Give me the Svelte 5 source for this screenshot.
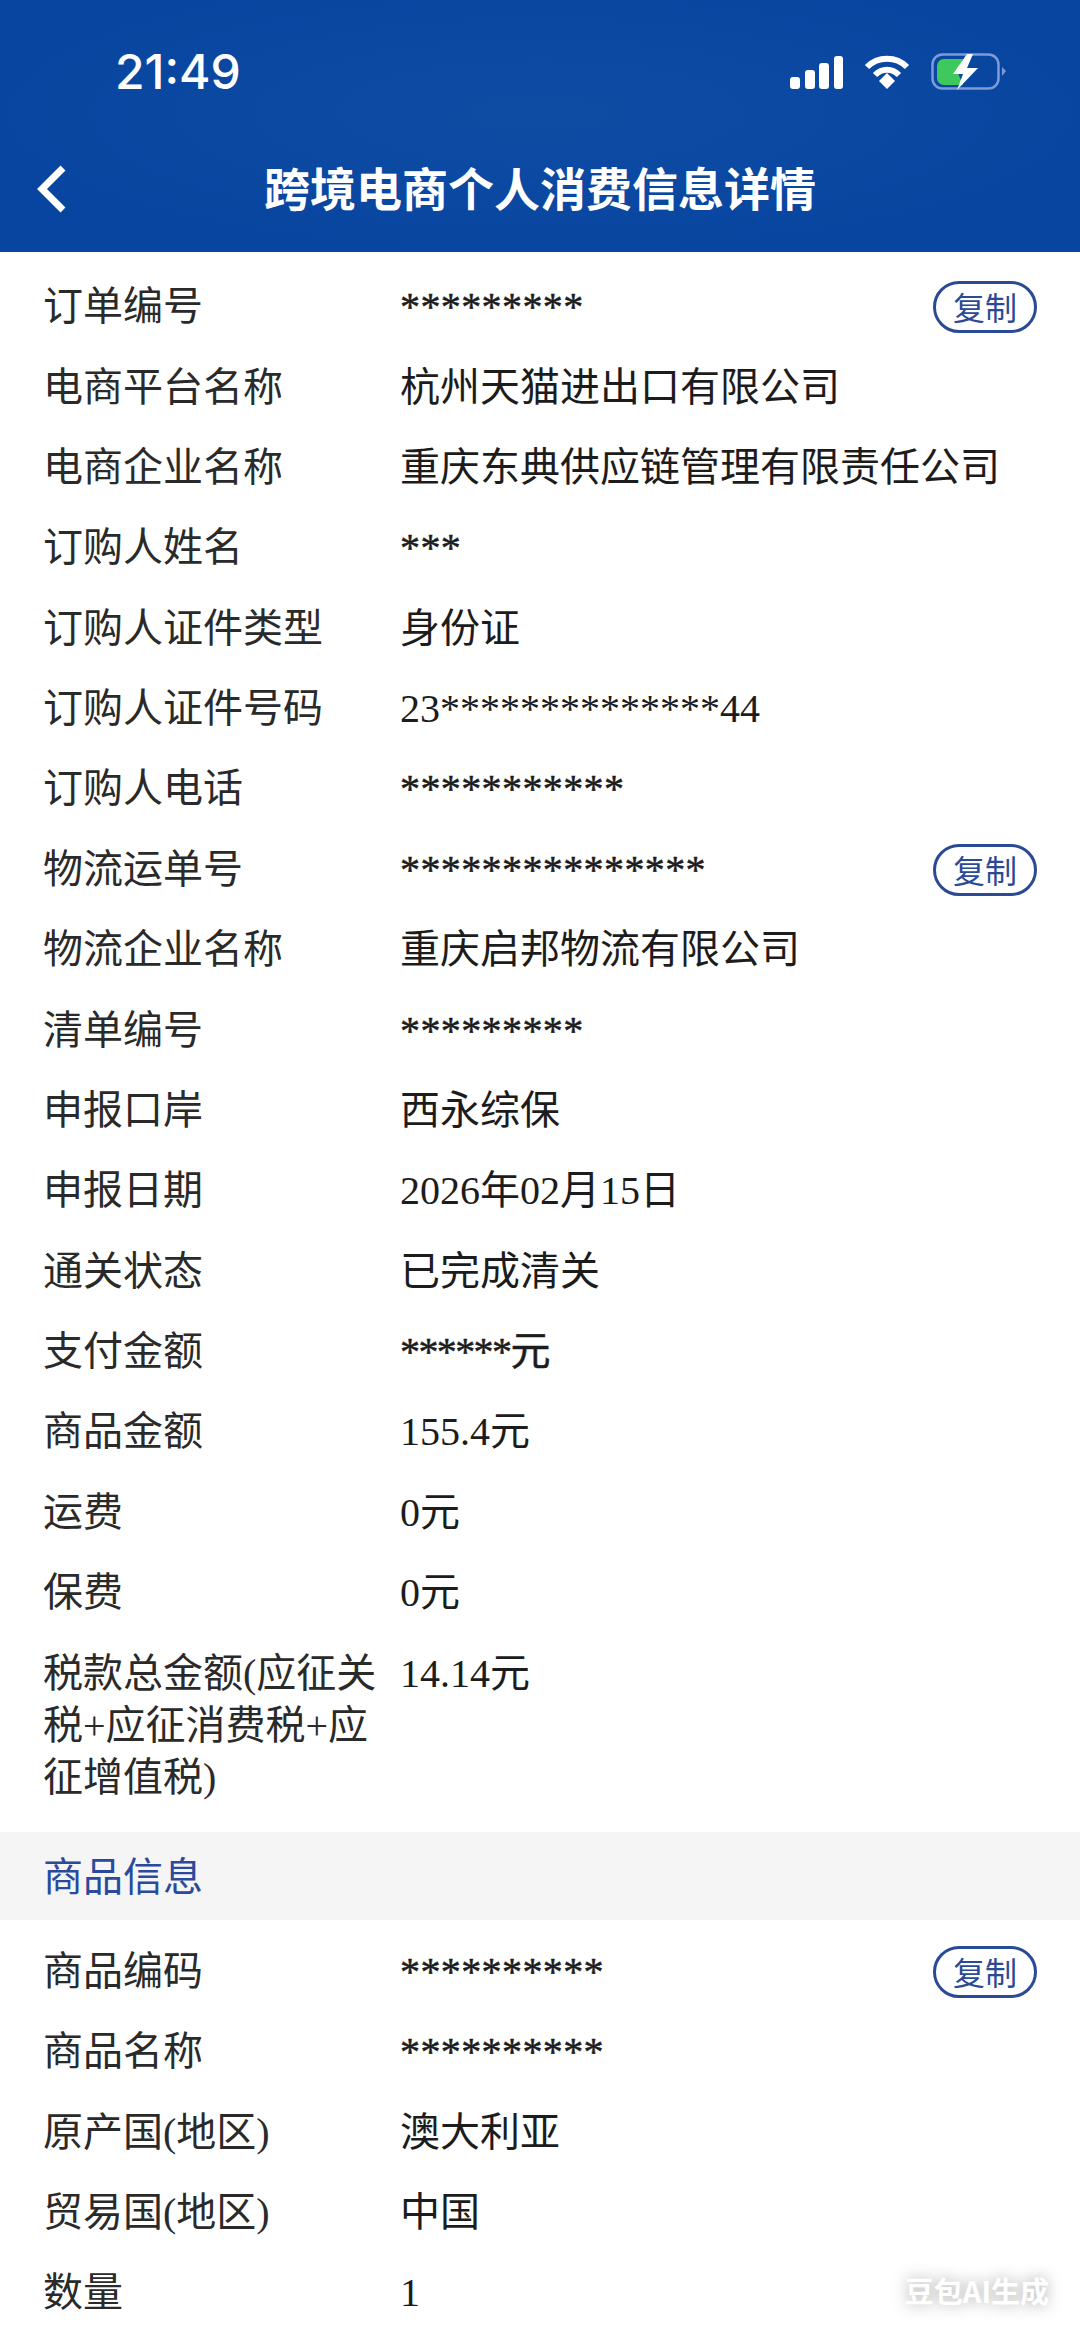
<script>
  const orderRows = [
    { label: "订单编号", value: "*********", copy: true },
    { label: "电商平台名称", value: "杭州天猫进出口有限公司" },
    { label: "电商企业名称", value: "重庆东典供应链管理有限责任公司" },
    { label: "订购人姓名", value: "***" },
    { label: "订购人证件类型", value: "身份证" },
    { label: "订购人证件号码", value: "23**************44" },
    { label: "订购人电话", value: "***********" },
    { label: "物流运单号", value: "***************", copy: true },
    { label: "物流企业名称", value: "重庆启邦物流有限公司" },
    { label: "清单编号", value: "*********" },
    { label: "申报口岸", value: "西永综保" },
    { label: "申报日期", value: "2026年02月15日" },
    { label: "通关状态", value: "已完成清关" },
    { label: "支付金额", value: "******元", tight: true },
    { label: "商品金额", value: "155.4元" },
    { label: "运费", value: "0元" },
    { label: "保费", value: "0元" },
    { label: "税款总金额(应征关税+应征消费税+应征增值税)", value: "14.14元" },
  ];

  const goodsRows = [
    { label: "商品编码", value: "**********", copy: true },
    { label: "商品名称", value: "**********" },
    { label: "原产国(地区)", value: "澳大利亚" },
    { label: "贸易国(地区)", value: "中国" },
    { label: "数量", value: "1" },
  ];
</script>

{#snippet row(item)}
  <div class="row">
    <div class="label">{item.label}</div>
    <div class="value" class:masked={item.value.startsWith("*")} class:tight={item.tight}>{item.value}</div>
    {#if item.copy}
      <button class="copy">复制</button>
    {/if}
  </div>
{/snippet}

<div class="page">
  <header class="header">
    <div class="status">
      <span class="time">21:49</span>
      <div class="status-icons">
        <svg class="signal" viewBox="0 0 53 33" fill="#fff">
          <rect x="0" y="21" width="10" height="12" rx="3" />
          <rect x="15" y="14" width="10" height="19" rx="3" />
          <rect x="29" y="7" width="10" height="26" rx="3" />
          <rect x="44" y="0" width="9" height="33" rx="3" />
        </svg>
        <svg class="wifi" viewBox="0 0 46 34" fill="none" stroke="#fff" stroke-width="6">
          <path d="M3 12 C14 1 32 1 43 12" />
          <path d="M11 20 C18 13 28 13 35 20" />
          <path d="M15 26 L23 18 L31 26 L23 34 Z" fill="#fff" stroke="none" />
        </svg>
        <svg class="battery" viewBox="0 0 76 38">
          <rect x="1.5" y="1.5" width="66" height="34" rx="10" fill="none" stroke="#7d9bd6" stroke-width="2.5" />
          <path d="M6 13 a7 7 0 0 1 7 -7 h19 l-6 12 l6 14 h-19 a7 7 0 0 1 -7 -7 Z" fill="#3ec95c" />
          <path d="M71 14 L75 18 L71 23 Z" fill="#7d9bd6" />
          <path d="M36 1 L22 21 L32 21 L26 37 L47 15 L36 15 L42 1 Z" fill="#fff" />
        </svg>
      </div>
    </div>
    <div class="titlebar">
      <svg class="back" viewBox="0 0 32 48" fill="none" stroke="#fff" stroke-width="7">
        <path d="M28 3 L7 24 L28 45" />
      </svg>
      <h1 class="title">跨境电商个人消费信息详情</h1>
    </div>
  </header>

  <section class="list">
    {#each orderRows as item}
      {@render row(item)}
    {/each}
  </section>

  <div class="section-title">商品信息</div>

  <section class="list goods">
    {#each goodsRows as item}
      {@render row(item)}
    {/each}
  </section>

  <div class="watermark">豆包AI生成</div>
</div>

<style>
  :global(body) {
    margin: 0;
    background: #fff;
  }

  .page {
    position: relative;
    height: 2335px;
    overflow: hidden;
    background: #fff;
    font-family: "Liberation Serif", "Noto Sans CJK SC", serif;
    font-size: 40px;
    line-height: 52px;
    color: #262626;
  }

  .header {
    height: 252px;
    background: radial-gradient(ellipse at 50% 45%, #0e4ca4, #0845a0 75%);
    color: #fff;
    font-family: "Inter", "Noto Sans CJK SC", sans-serif;
  }

  .status {
    display: flex;
    align-items: center;
    justify-content: space-between;
    height: 56px;
    padding: 44px 73px 0 115px;
  }

  .time {
    font-size: 48px;
    font-weight: 500;
    line-height: 56px;
  }

  .status-icons {
    display: flex;
    align-items: center;
    gap: 21px;
  }

  .signal {
    width: 53px;
    height: 33px;
  }

  .wifi {
    width: 46px;
    height: 34px;
  }

  .battery {
    width: 76px;
    height: 38px;
  }

  .titlebar {
    display: flex;
    align-items: center;
    justify-content: center;
    position: relative;
    height: 60px;
    margin-top: 59px;
  }

  .back {
    position: absolute;
    left: 35px;
    top: 6px;
    width: 32px;
    height: 48px;
  }

  .title {
    margin: 0;
    font-size: 46px;
    font-weight: 700;
    line-height: 60px;
  }

  .list {
    padding: 15px 0 14px;
  }

  .goods {
    padding-top: 12px;
  }

  .row {
    display: flex;
    align-items: flex-start;
    padding: 14.2px 43px;
  }

  .label {
    flex: 0 0 357px;
    color: #2a2a2a;
  }

  .value {
    flex: 1;
    color: #1c1c1c;
    white-space: nowrap;
  }

  .masked {
    letter-spacing: 0.4px;
    -webkit-text-stroke: 0.5px #1c1c1c;
  }

  .tight {
    letter-spacing: -1.6px;
  }

  .copy {
    box-sizing: border-box;
    width: 104px;
    height: 52px;
    padding: 0 0 2px;
    border: 3px solid #2b4a96;
    border-radius: 26px;
    background: #fff;
    color: #2b4a96;
    font-family: "Noto Sans CJK SC", sans-serif;
    font-size: 32px;
    line-height: 44px;
  }

  .section-title {
    box-sizing: border-box;
    height: 88px;
    padding: 3px 0 0 43px;
    background: #f5f5f5;
    color: #2b4a9c;
    line-height: 85px;
  }

  .watermark {
    position: absolute;
    right: 31px;
    bottom: 27px;
    color: #fff;
    font-family: "Noto Sans CJK SC", sans-serif;
    font-size: 29px;
    font-weight: 700;
    line-height: 36px;
    text-shadow: 0 0 16px rgba(0, 0, 0, 0.35);
  }
</style>
